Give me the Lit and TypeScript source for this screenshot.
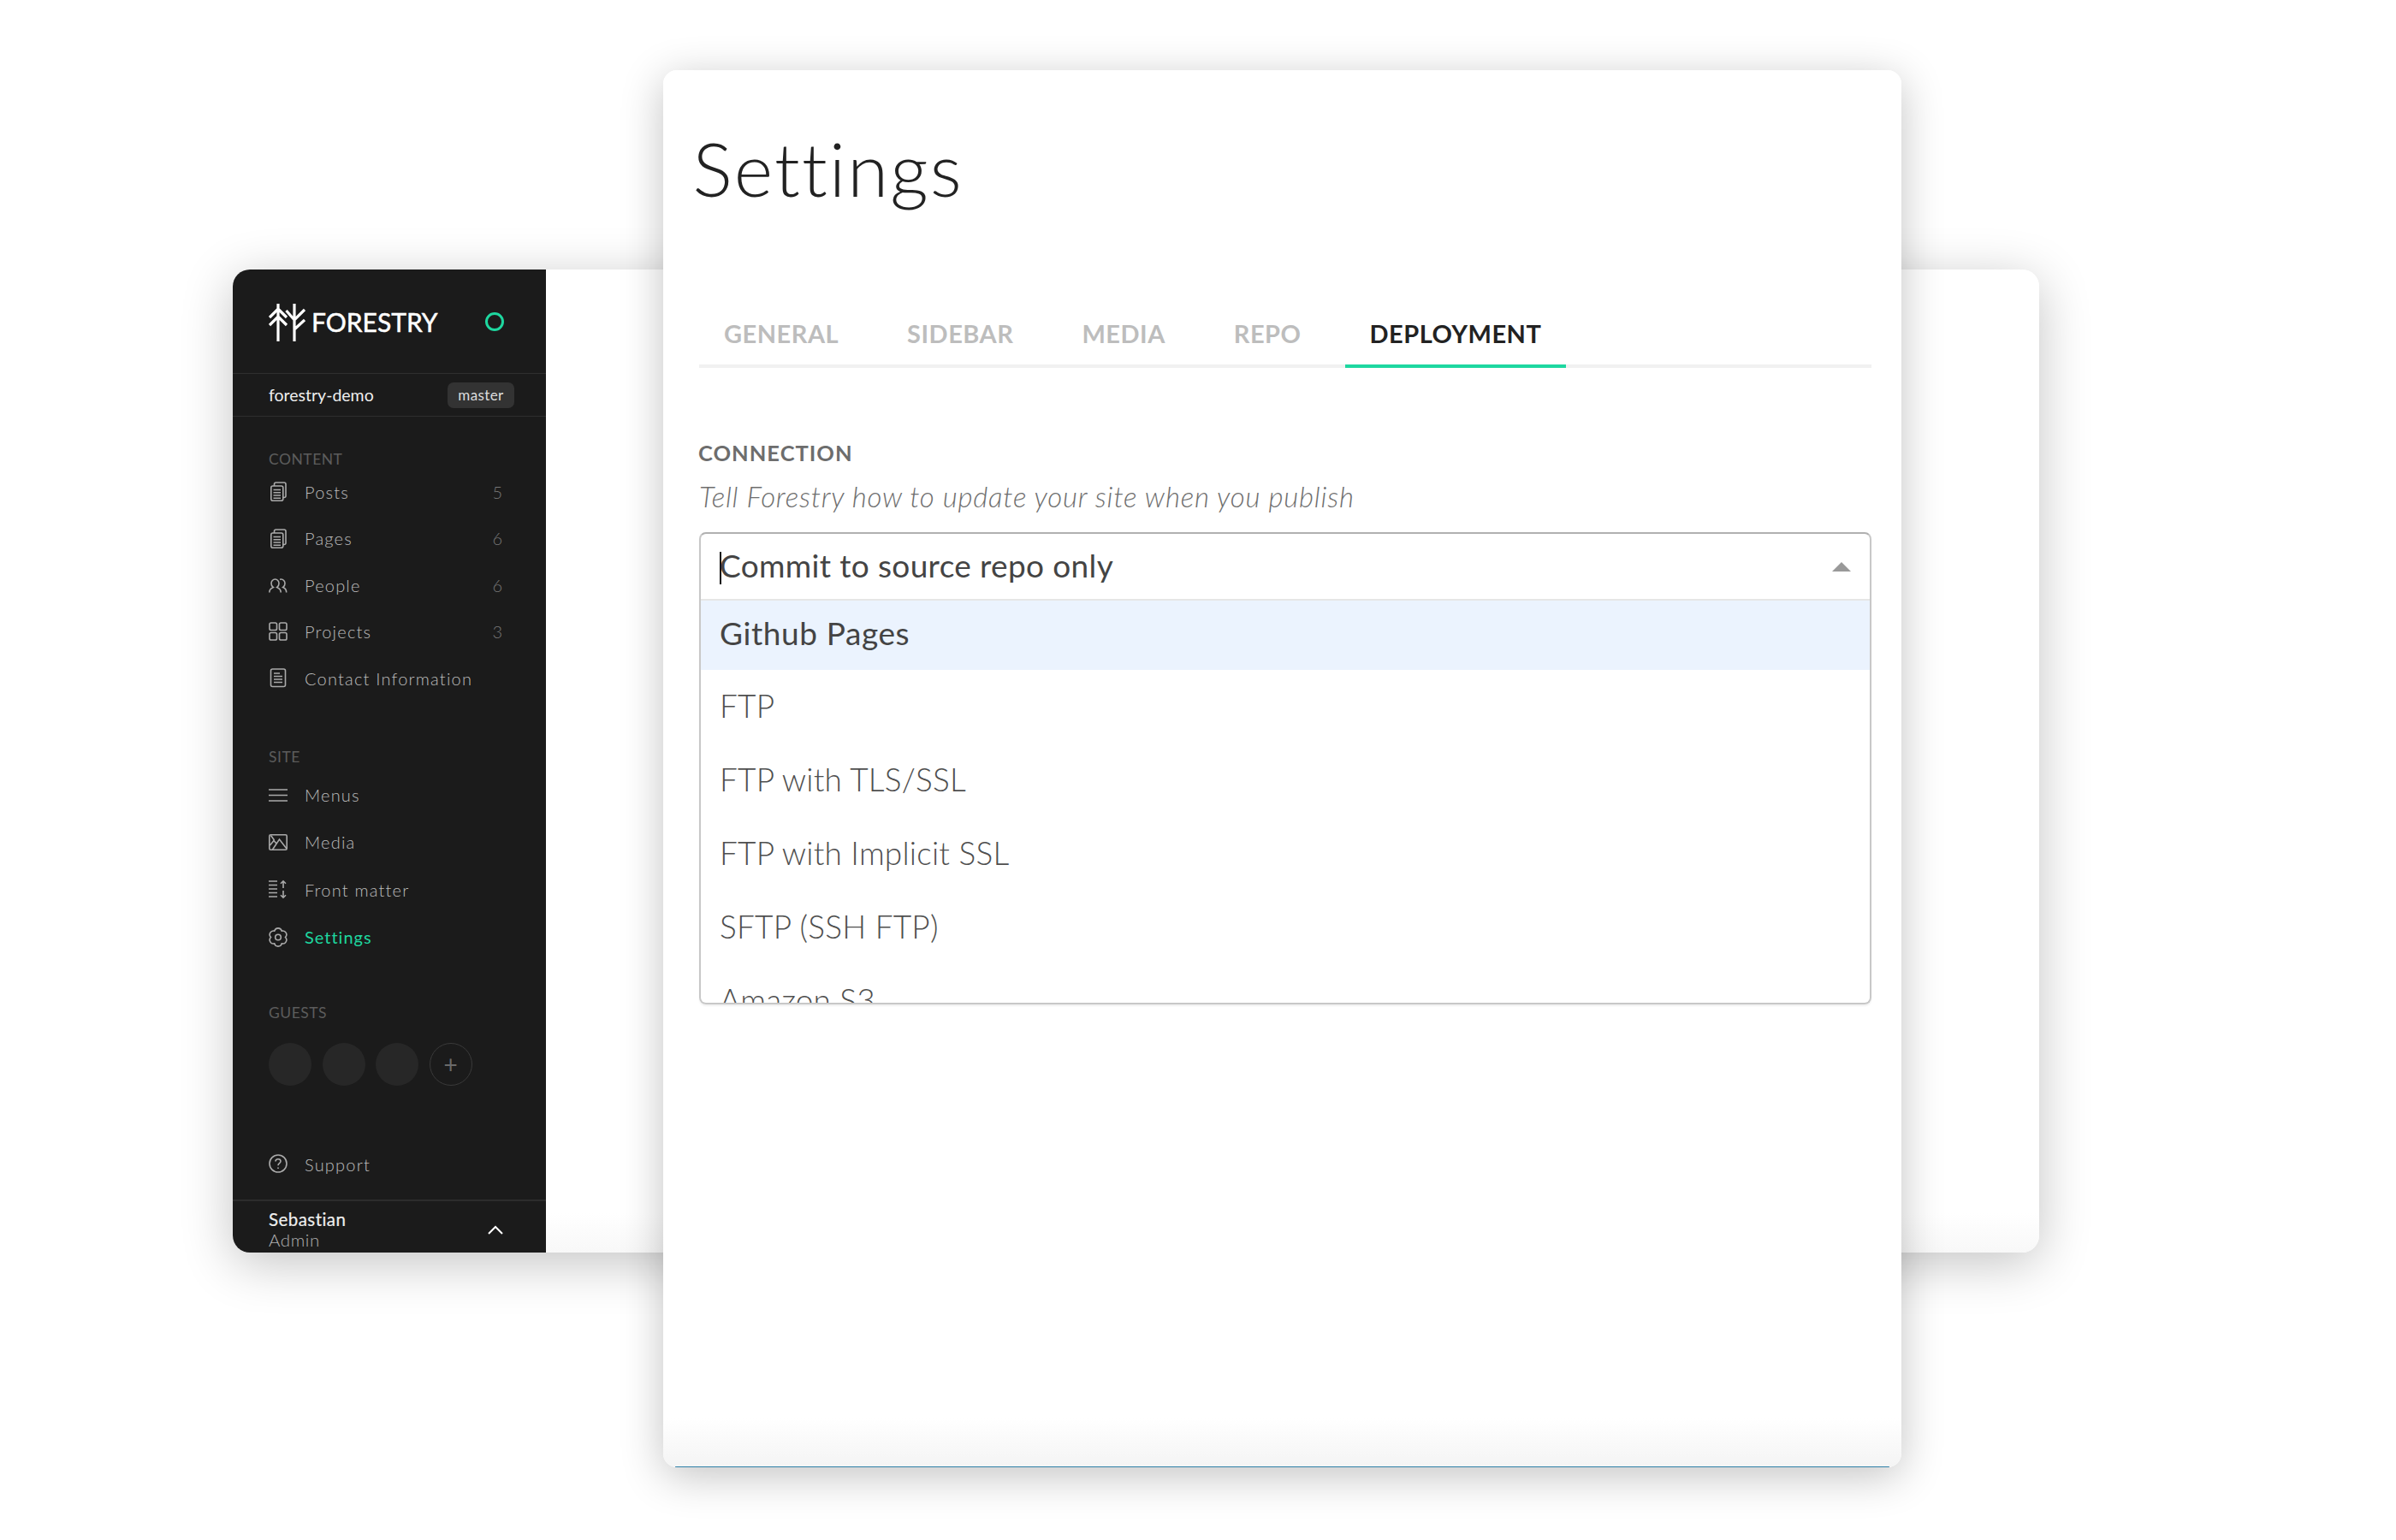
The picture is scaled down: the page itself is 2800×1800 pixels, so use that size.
import { LitElement, css, html, svg } from "lit";
import { customElement } from "lit/decorators.js";

const icons: Record<string, unknown> = {
  stack: svg`<path d="M6.500 5V3c0-1.200.8-2 2-2h9.500c1.200 0 2 .8 2 2v13.500c0 1.200-.8 2-2 2h-1"/><rect x="2.800" y="5" width="14" height="17.200" rx="2"/><path d="M5.500 9.500h8.500M5.500 12.800h8.500M5.500 16h8.500M5.500 19.200h8.500"/>`,
  people: svg`<path d="M.8 20.500c0-3 2-5 4.500-6-1.500-1-2.300-2.700-2.300-4.500C3 7.400 5 5 7.500 5s4.500 2.400 4.500 5c0 1.800-.8 3.500-2.300 4.500 2.500 1 4.500 3 4.500 6"/><path d="M13 5.200c.5-.1 1-.2 1.500-.2 2.500 0 4.500 2.400 4.500 5 0 1.800-.8 3.500-2.300 4.500 2.500 1 4 3 4 6"/>`,
  grid: svg`<rect x="1" y="1" width="8.500" height="8.500" rx="1.800"/><rect x="12.500" y="1" width="8.500" height="8.500" rx="1.800"/><rect x="1" y="12.500" width="8.500" height="8.500" rx="1.800"/><rect x="12.500" y="12.500" width="8.500" height="8.500" rx="1.800"/>`,
  doc: svg`<rect x="2.500" y="1" width="17" height="20.500" rx="2"/><path d="M6 6h7M6 9.500h10M6 13h10M6 16.500h10"/>`,
  menu: svg`<path d="M0 5h22M0 11.500h22M0 18h22"/>`,
  media: svg`<rect x=".8" y="2.800" width="20.400" height="17.400" rx="1.500"/><path d="M1.500 15 6 9.500l3.500 4M4.500 20l8-12 8.500 11"/><path d="M2.500 3.500 6.500 9"/>`,
  matter: svg`<path d="M0 2h10M0 6.500h10M0 11h10M0 15.500h10M0 20h10"/><path d="M17 10V2M14 4.800 17 1.800l3 3M17 13v8M14 18.200l3 3 3-3"/>`,
  gear: svg`<path d="M6.750 4.140A4.400 4.400 0 0 1 15.250 4.140A4.400 4.400 0 0 1 19.500 11.500A4.400 4.400 0 0 1 15.250 18.860A4.400 4.400 0 0 1 6.750 18.860A4.400 4.400 0 0 1 2.500 11.500A4.400 4.400 0 0 1 6.750 4.140z"/><circle cx="11" cy="11.500" r="3.300"/>`,
  help: svg`<circle cx="11" cy="11" r="10"/><path d="M8 8.500C8 6.800 9.300 5.700 11 5.700s3 1.100 3 2.600c0 2.500-3 2.400-3 5"/><path d="M11 15.600v1.400"/>`,
};

type NavItem = { label: string; icon: string; count?: string; active?: boolean };

const contentNav: NavItem[] = [
  { label: "Posts", icon: "stack", count: "5" },
  { label: "Pages", icon: "stack", count: "6" },
  { label: "People", icon: "people", count: "6" },
  { label: "Projects", icon: "grid", count: "3" },
  { label: "Contact Information", icon: "doc" },
];

const siteNav: NavItem[] = [
  { label: "Menus", icon: "menu" },
  { label: "Media", icon: "media" },
  { label: "Front matter", icon: "matter" },
  { label: "Settings", icon: "gear", active: true },
];

const tabs = ["GENERAL", "SIDEBAR", "MEDIA", "REPO", "DEPLOYMENT"];
const options = ["Github Pages", "FTP", "FTP with TLS/SSL", "FTP with Implicit SSL", "SFTP (SSH FTP)", "Amazon S3"];

@customElement("app-root")
export class AppRoot extends LitElement {
  static styles = css`
    :host {
      display: block;
      position: relative;
      width: 2800px;
      height: 1800px;
      overflow: hidden;
      background: #fff;
      font-family: Lato, "Liberation Sans", sans-serif;
    }

    /* the two windows float on a free canvas */
    .back {
      position: absolute;
      left: 272px;
      top: 315px;
      width: 2111px;
      height: 1149px;
      display: flex;
      border-radius: 20px;
      background: linear-gradient(#fff 96%, #f8f8f8);
      box-shadow: 0 12px 60px rgb(0 0 0 / 24%);
    }

    .sidebar {
      width: 366px;
      height: 100%;
      display: flex;
      flex-direction: column;
      overflow: hidden;
      box-sizing: border-box;
      border-radius: 20px 0 0 20px;
      background: #1b1b1b;
      color: #bcbcbc;
    }

    .brand {
      flex: none;
      height: 122px;
      box-sizing: border-box;
      display: flex;
      align-items: center;
      padding: 0 49px 0 42px;
      border-bottom: 1px solid #2f2f2f;
    }
    .logo {
      width: 43px;
      height: 44px;
      margin-top: 2px;
      fill: none;
      stroke: #fff;
      stroke-width: 3.200;
    }
    .wordmark {
      margin-left: 7px;
      flex: 1;
      color: #fff;
      font-size: 30px;
      line-height: 36px;
      letter-spacing: 0;
      -webkit-text-stroke: 0.5px #fff;
    }
    .status {
      width: 22px;
      height: 22px;
      box-sizing: border-box;
      border: 3.500px solid #1ed79f;
      border-radius: 50%;
    }

    .repo {
      flex: none;
      height: 50px;
      box-sizing: border-box;
      display: flex;
      align-items: center;
      justify-content: space-between;
      padding: 0 37px 0 42px;
      border-bottom: 1px solid #2f2f2f;
      color: #eee;
      font-size: 19.500px;
    }
    .chip {
      width: 78px;
      height: 30px;
      display: flex;
      align-items: center;
      justify-content: center;
      border-radius: 7px;
      background: #333;
      color: #ddd;
      font-size: 17px;
      letter-spacing: 0.4px;
    }

    .label {
      flex: none;
      height: 20px;
      padding-left: 42px;
      color: #5c5c5c;
      font-size: 17.500px;
      line-height: 20px;
      letter-spacing: 0.5px;
    }
    .label.content { margin-top: 40px; margin-bottom: 0.500px; }
    .label.site { margin-top: 55px; margin-bottom: 6.500px; }
    .label.guests { margin-top: 51px; margin-bottom: 25px; }

    .row {
      flex: none;
      height: 54.500px;
      display: flex;
      align-items: center;
      padding: 0 51px 0 42px;
      font-size: 20px;
      font-weight: 300;
      letter-spacing: 1.200px;
    }
    .row.tall { height: 55.300px; }
    .row.active {
      color: #1ed79f;
      font-weight: 400;
      letter-spacing: 1px;
    }
    .row .text { flex: 1; margin-left: 20px; }
    .row .count { color: #777; letter-spacing: 0; }
    .icon {
      flex: none;
      width: 22px;
      height: 23px;
      fill: none;
      stroke: #aaa;
      stroke-width: 1.600;
    }

    .guests-row {
      flex: none;
      display: flex;
      gap: 12.500px;
      padding-left: 42px;
    }
    .guest {
      width: 50px;
      height: 50px;
      box-sizing: border-box;
      display: flex;
      align-items: center;
      justify-content: center;
      border-radius: 50%;
      background: #272727;
    }
    .guest.add {
      background: none;
      border: 1.500px solid #3a3a3a;
      color: #6a6a6a;
      font-size: 28px;
    }

    .support { margin-top: 65px; }

    .user {
      flex: none;
      height: 62px;
      box-sizing: border-box;
      margin-top: 14px;
      display: flex;
      align-items: flex-start;
      padding: 9px 50px 0 42px;
      border-top: 2px solid #2c2c2c;
    }
    .who { flex: 1; }
    .name {
      color: #eee;
      font-size: 20.500px;
      line-height: 24px;
      letter-spacing: 0.450px;
      -webkit-text-stroke: 0.2px #eee;
    }
    .role {
      color: #b0b0b0;
      font-size: 20.500px;
      font-weight: 300;
      line-height: 24px;
      letter-spacing: 0.6px;
    }
    .chevron {
      width: 18px;
      height: 11px;
      margin-top: 19px;
      fill: none;
      stroke: #fff;
      stroke-width: 2;
    }

    .front {
      position: absolute;
      left: 775px;
      top: 82px;
      width: 1447px;
      height: 1633px;
      box-sizing: border-box;
      padding: 0 35px 0 42px;
      overflow: hidden;
      border-radius: 16px;
      background: linear-gradient(#fff 96.500%, #f4f4f4);
    }
    .front-shadow {
      position: absolute;
      left: 775px;
      top: 82px;
      width: 1447px;
      height: 1633px;
      border-radius: 16px;
      box-shadow: 0 10px 50px rgb(0 0 0 / 24%);
    }
    .front::after {
      content: "";
      position: absolute;
      left: 14px;
      right: 14px;
      bottom: 0;
      height: 1.500px;
      background: #2e80a8;
    }

    h1 {
      margin: 0 0 0 -7.500px;
      padding-top: 62px;
      color: #222;
      font-size: 87px;
      font-weight: 300;
      line-height: 106px;
      letter-spacing: 2.100px;
    }

    .tabs {
      display: flex;
      gap: 22px;
      margin-top: 110px;
      height: 70px;
      box-sizing: border-box;
      border-bottom: 4px solid #f1f1f1;
    }
    .tab {
      height: 70px;
      box-sizing: border-box;
      padding: 10px 29px 0;
      color: #bdbdbd;
      font-size: 29px;
      font-weight: 700;
      line-height: 40px;
      letter-spacing: 0.500px;
    }
    .tab.active {
      color: #222;
      border-bottom: 4px solid #1ed7a0;
    }

    .caption {
      margin: 84px 0 0 -1px;
      color: #6d6d6d;
      font-size: 25.500px;
      font-weight: 700;
      line-height: 30px;
      letter-spacing: 1px;
    }
    .hint {
      margin-top: 17px;
      color: #6f6f6f;
      font-size: 33px;
      font-style: italic;
      font-weight: 300;
      line-height: 38px;
      letter-spacing: 0.780px;
    }

    .select {
      margin-top: 23px;
      height: 552px;
      box-sizing: border-box;
      border: 2px solid #c8c8c8;
      border-top-color: #b0b0b0;
      border-radius: 8px;
      box-shadow: 0 2px 2px rgb(0 0 0 / 6%);
      overflow: hidden;
      color: #4f4f4f;
      font-size: 37px;
    }
    .input {
      height: 78px;
      box-sizing: border-box;
      display: flex;
      align-items: center;
      justify-content: space-between;
      padding: 0 22px 3px 22px;
      border-bottom: 2px solid #e6e6e6;
      color: #444;
      letter-spacing: 0.350px;
    }
    .caret {
      display: inline-block;
      width: 2px;
      height: 38px;
      margin-right: -2px;
      background: #111;
      vertical-align: -8px;
    }
    .arrow {
      width: 0;
      height: 0;
      border-left: 11px solid transparent;
      border-right: 11px solid transparent;
      border-bottom: 11px solid #999;
      margin-top: 4px;
    }
    .option {
      height: 86px;
      box-sizing: border-box;
      padding: 0 22px 3px;
      display: flex;
      align-items: center;
      font-weight: 300;
      letter-spacing: 0.200px;
    }
    .option.first {
      height: 81px;
      padding-bottom: 6px;
      background: #ebf3fe;
      color: #444;
      font-weight: 400;
      letter-spacing: 0.600px;
    }
  `;

  renderRow(item: NavItem, tall = false) {
    return html`
      <div class="row ${tall ? "tall" : ""} ${item.active ? "active" : ""}">
        <svg class="icon" viewBox="0 0 22 23">${icons[item.icon]}</svg>
        <span class="text">${item.label}</span>
        ${item.count ? html`<span class="count">${item.count}</span>` : ""}
      </div>
    `;
  }

  renderSidebar() {
    return html`
      <aside class="sidebar">
        <div class="brand">
          <svg class="logo" viewBox="0 0 43 44">
            <path d="M11 0v44M1 16 11 6l10 10M1 25 11 15l10 10"/>
            <path d="M30 0v44M20.500 8 30 19l12-12M30 30l12-11"/>
          </svg>
          <span class="wordmark">FORESTRY</span>
          <span class="status"></span>
        </div>
        <div class="repo"><span>forestry-demo</span><span class="chip">master</span></div>
        <div class="label content">CONTENT</div>
        ${contentNav.map(item => this.renderRow(item))}
        <div class="label site">SITE</div>
        ${siteNav.map(item => this.renderRow(item, true))}
        <div class="label guests">GUESTS</div>
        <div class="guests-row">
          <span class="guest"></span>
          <span class="guest"></span>
          <span class="guest"></span>
          <span class="guest add">+</span>
        </div>
        <div class="support">${this.renderRow({ label: "Support", icon: "help" })}</div>
        <div class="user">
          <div class="who">
            <div class="name">Sebastian</div>
            <div class="role">Admin</div>
          </div>
          <svg class="chevron" viewBox="0 0 18 11"><path d="M1 10 9 2l8 8"/></svg>
        </div>
      </aside>
    `;
  }

  render() {
    return html`
      <div class="back">${this.renderSidebar()}</div>
      <div class="front-shadow"></div>
      <main class="front">
        <h1>Settings</h1>
        <nav class="tabs">
          ${tabs.map(tab => html`<div class="tab ${tab === "DEPLOYMENT" ? "active" : ""}">${tab}</div>`)}
        </nav>
        <div class="caption">CONNECTION</div>
        <div class="hint">Tell Forestry how to update your site when you publish</div>
        <div class="select">
          <div class="input">
            <span><span class="caret"></span>Commit to source repo only</span>
            <span class="arrow"></span>
          </div>
          ${options.map((option, index) => html`<div class="option ${index === 0 ? "first" : ""}">${option}</div>`)}
        </div>
      </main>
    `;
  }
}
